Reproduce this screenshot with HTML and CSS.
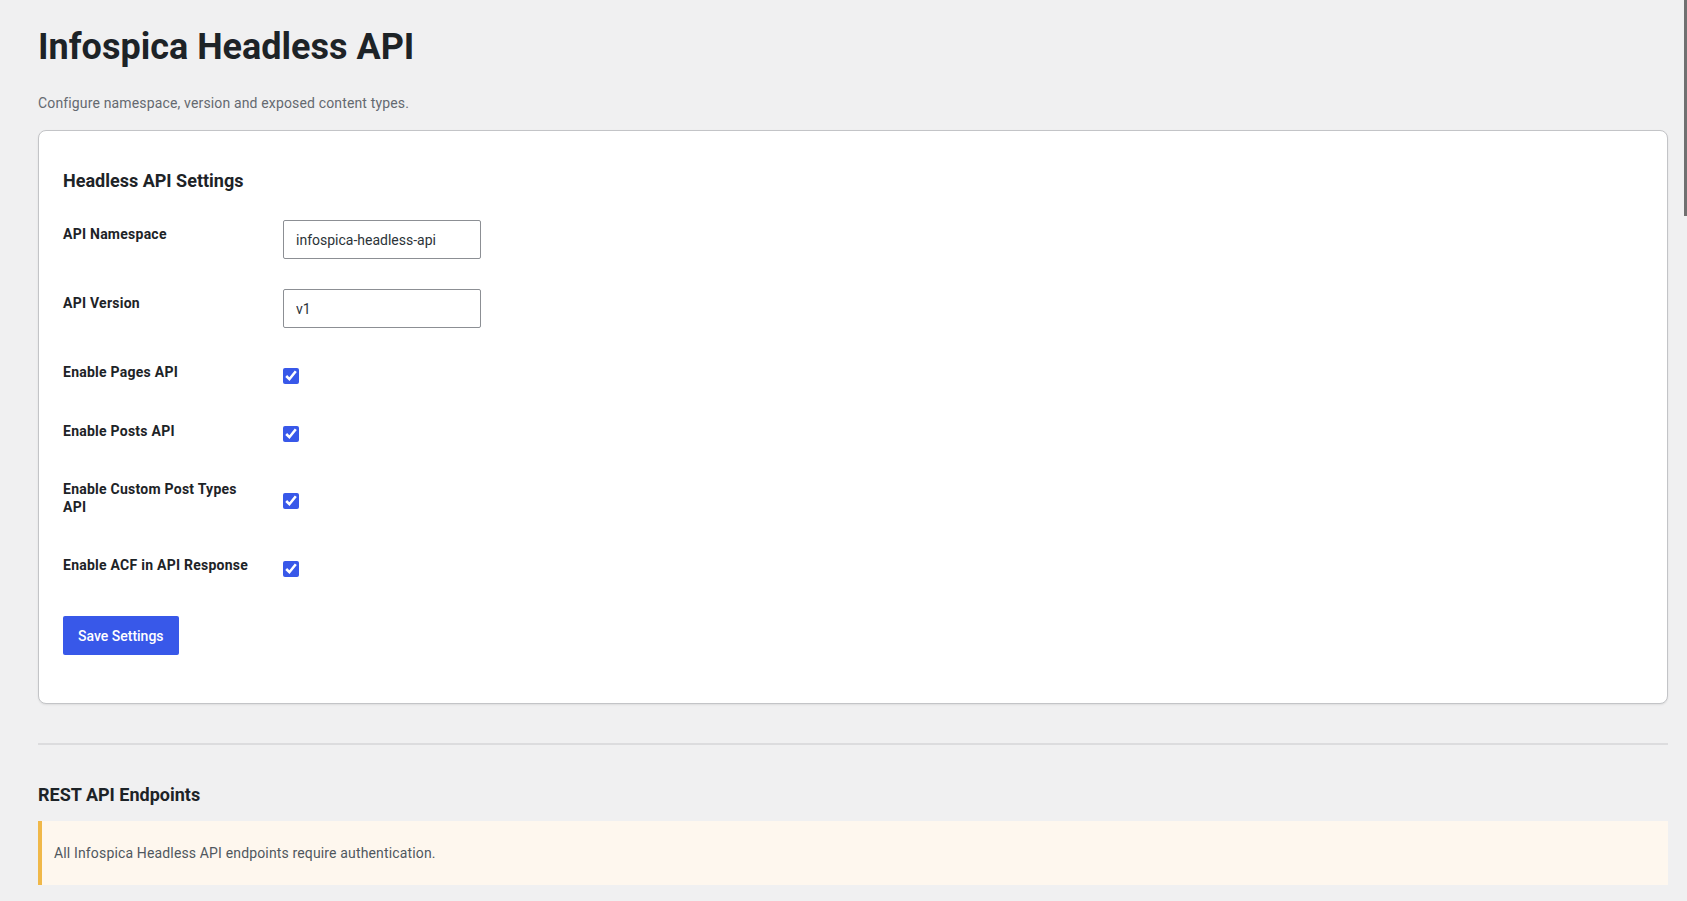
FILE: index.html
```html
<!DOCTYPE html>
<html lang="en">
<head>
    <meta charset="UTF-8">
    <meta name="viewport" content="width=device-width, initial-scale=1.0">
    <title>Infospica Headless API</title>
    <link rel="stylesheet" href="styles.css">
</head>
<body>
    <div class="wrap">
        <h1>Infospica Headless API</h1>
        <p class="intro">Configure namespace, version and exposed content types.</p>

        <div class="card">
            <h2>Headless API Settings</h2>
            <form>
                <table class="form-table">
                    <tr>
                        <th><label for="ihapi_namespace">API Namespace</label></th>
                        <td><input type="text" id="ihapi_namespace" class="regular-text" value="infospica-headless-api" /></td>
                    </tr>
                    <tr>
                        <th><label for="ihapi_version">API Version</label></th>
                        <td><input type="text" id="ihapi_version" class="regular-text" value="v1" /></td>
                    </tr>
                    <tr>
                        <th><label for="ihapi_pages">Enable Pages API</label></th>
                        <td><input type="checkbox" id="ihapi_pages" checked /></td>
                    </tr>
                    <tr>
                        <th><label for="ihapi_posts">Enable Posts API</label></th>
                        <td><input type="checkbox" id="ihapi_posts" checked /></td>
                    </tr>
                    <tr>
                        <th><label for="ihapi_cpt">Enable Custom Post Types API</label></th>
                        <td><input type="checkbox" id="ihapi_cpt" checked /></td>
                    </tr>
                    <tr>
                        <th><label for="ihapi_acf">Enable ACF in API Response</label></th>
                        <td><input type="checkbox" id="ihapi_acf" checked /></td>
                    </tr>
                </table>
                <p class="submit"><button type="button" class="button-primary">Save Settings</button></p>
            </form>
        </div>

        <hr>

        <h2 class="section-title">REST API Endpoints</h2>
        <div class="notice notice-warning">
            <p>All Infospica Headless API endpoints require authentication.</p>
        </div>
    </div>

    <div class="scroll-thumb"></div>
</body>
</html>
```

FILE: styles.css
```css
body {
    margin: 0;
    background: #f0f0f1;
    color: #1d2327;
    font-family: Roboto, "Noto Sans", sans-serif;
    font-size: 14px;
    line-height: 1.3;
    letter-spacing: 0.15px;
}
.wrap {
    padding: 0 19px 0 38px;
}
h1 {
    margin: 0;
    padding-top: 24px;
    font-size: 36px;
    font-weight: 700;
    line-height: 1.3;
    letter-spacing: 0;
    color: #1d2327;
}
.intro {
    margin: 23px 0 18px;
    color: #646970;
}
.card {
    background: white;
    border: 1px solid #c3c4c7;
    border-radius: 8px;
    box-shadow: 0 1px 2px rgba(0,0,0,0.08);
    padding: 0 24px 48px;
}
.card h2 {
    margin: 38px 0 13px;
    font-size: 18px;
    font-weight: 700;
    letter-spacing: 0;
}
.form-table {
    border-collapse: collapse;
    width: 100%;
}
.form-table th {
    width: 190px;
    padding: 20px 20px 20px 0;
    text-align: left;
    vertical-align: top;
    font-weight: 700;
    line-height: 1.3;
    letter-spacing: 0.25px;
}
.form-table td {
    padding: 15px 10px;
    vertical-align: middle;
}
.regular-text {
    width: 198px;
    height: 39px;
    box-sizing: border-box;
    padding: 0 12px;
    border: 1px solid #8c8f94;
    border-radius: 2px;
    font-family: inherit;
    font-size: 14px;
    color: #2c3338;
    background: white;
}
input[type="checkbox"] {
    display: block;
    width: 16px;
    height: 16px;
    margin: 7px 0 0;
    accent-color: #3858e9;
}
.submit {
    margin: 22px 0 0;
    padding: 0;
}
.button-primary {
    height: 39px;
    padding: 0 15px;
    background: #3858e9;
    color: white;
    border: none;
    border-radius: 2px;
    font-family: inherit;
    font-size: 14px;
    font-weight: 500;
    cursor: pointer;
}
.button-primary:hover {
    background: #2145e6;
}
hr {
    margin: 39px 0 0;
    border: 0;
    border-top: 2px solid #dcdcde;
}
.section-title {
    margin: 38px 0 14px;
    font-size: 18px;
    font-weight: 700;
    letter-spacing: 0;
}
.notice {
    background: #fef7ee;
    border-left: 4px solid #f0b849;
    padding: 0 12px;
}
.notice p {
    margin: 0;
    padding: 23px 0;
    color: #50575e;
    line-height: 18px;
}
.scroll-thumb {
    position: fixed;
    top: 0;
    right: 0;
    width: 3px;
    height: 216px;
    background: #707070;
}
```
